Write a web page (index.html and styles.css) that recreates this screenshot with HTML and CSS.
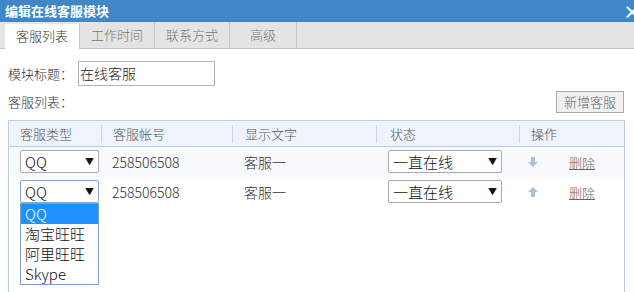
FILE: index.html
```html
<!DOCTYPE html>
<html lang="zh-CN">
<head>
    <meta charset="UTF-8">
    <title>编辑在线客服模块</title>
    <link rel="stylesheet" href="styles.css">
</head>
<body>
    <div class="dialog">
        <div class="dialog-title">
            <span>编辑在线客服模块</span>
            <span class="close">&times;</span>
        </div>
        <ul class="tabs">
            <li class="active">客服列表</li>
            <li>工作时间</li>
            <li>联系方式</li>
            <li class="last">高级</li>
        </ul>
        <div class="panel">
            <div class="field">
                <span class="label">模块标题：</span>
                <div class="text-input">在线客服</div>
            </div>
            <div class="list-head">
                <span class="label">客服列表：</span>
                <button class="btn">新增客服</button>
            </div>
            <div class="grid">
                <div class="row head">
                    <div class="c1">客服类型</div>
                    <div class="c2">客服帐号</div>
                    <div class="c3">显示文字</div>
                    <div class="c4">状态</div>
                    <div class="c5">操作</div>
                </div>
                <div class="row odd">
                    <div class="c1"><div class="select small">QQ<span class="caret">&#9660;</span></div></div>
                    <div class="c2">258506508</div>
                    <div class="c3">客服一</div>
                    <div class="c4"><div class="select wide">一直在线<span class="caret">&#9660;</span></div></div>
                    <div class="c5">
                        <svg class="arrow" width="10" height="10" viewBox="0 0 10 10"><path d="M3 0h4v5h3l-5 5-5-5h3z" fill="#a9c1dc"/></svg>
                        <a href="#" class="del">删除</a>
                    </div>
                </div>
                <div class="row">
                    <div class="c1 drop">
                        <div class="select small focus">QQ<span class="caret">&#9660;</span></div>
                        <ul class="options">
                            <li class="on">QQ</li>
                            <li>淘宝旺旺</li>
                            <li>阿里旺旺</li>
                            <li>Skype</li>
                        </ul>
                    </div>
                    <div class="c2">258506508</div>
                    <div class="c3">客服一</div>
                    <div class="c4"><div class="select wide">一直在线<span class="caret">&#9660;</span></div></div>
                    <div class="c5">
                        <svg class="arrow" width="10" height="10" viewBox="0 0 10 10"><path d="M3 10h4v-5h3l-5-5-5 5h3z" fill="#a9c1dc"/></svg>
                        <a href="#" class="del">删除</a>
                    </div>
                </div>
            </div>
        </div>
    </div>
</body>
</html>
```

FILE: styles.css
```css
body {
    margin: 0;
    font-family: "Noto Sans CJK SC", "Noto Sans", sans-serif;
    font-size: 13px;
    font-weight: 300;
    color: #333;
    background-color: #fff;
    overflow: hidden;
}
.dialog {
    width: 634px;
    height: 292px;
    overflow: hidden;
}
.dialog-title {
    height: 22px;
    line-height: 22px;
    background-color: #3f87c6;
    color: #fff;
    font-weight: bold;
    font-size: 13px;
    padding-left: 5px;
    display: flex;
    justify-content: space-between;
}
.close {
    font-size: 18px;
    margin-right: -7px;
}
.tabs {
    list-style: none;
    margin: 0;
    padding: 0 0 0 5px;
    height: 26px;
    background-color: #e4e4e4;
    border-bottom: 1px solid #c6c6c6;
    display: flex;
}
.tabs li {
    width: 74px;
    border-right: 1px solid #c6c6c6;
    text-align: center;
    line-height: 26px;
    color: #777;
}
.tabs li.last {
    width: 66px;
}
.tabs li.active {
    background-color: #fff;
    color: #333;
    margin-top: 2px;
    height: 25px;
    line-height: 23px;
}
.panel {
    padding: 0 9px 0 8px;
}
.field {
    display: flex;
    align-items: center;
    margin-top: 12px;
}
.label {
    width: 70px;
}
.text-input {
    width: 134px;
    height: 23px;
    line-height: 23px;
    border: 1px solid #b4b4b4;
    font-size: 14px;
    padding-left: 1px;
    color: #222;
}
.list-head {
    display: flex;
    justify-content: space-between;
    align-items: center;
    margin-top: 3px;
    height: 25px;
}
.btn {
    font-family: inherit;
    font-weight: 300;
    font-size: 13px;
    color: #666;
    background-color: #f0f0f0;
    border: 1px solid #aaa;
    height: 22px;
    width: 68px;
    padding: 0;
    margin-right: 1px;
}
.grid {
    margin-top: 6px;
    border: 1px solid #b9cce8;
    height: 200px;
}
.row {
    display: flex;
    height: 30px;
    align-items: center;
    font-size: 14px;
}
.row.odd {
    background-color: #f7f9fd;
}
.row.head {
    height: 25px;
    background-color: #eef3fc;
    border-bottom: 1px solid #b9cce8;
    font-size: 13px;
    color: #555;
}
.row > div {
    box-sizing: border-box;
    padding-left: 11px;
}
.row.head > div {
    border-left: 1px solid #c9d6e8;
    line-height: 18px;
}
.row.head > div.c1 {
    border-left: none;
}
.c1 { width: 92px; }
.c2 { width: 131px; }
.c3 { width: 144px; padding-left: 12px !important; }
.c4 { width: 143px; }
.c5 { width: 105px; display: flex; align-items: center; }
.row.head .c4 { padding-left: 13px; }
.select {
    box-sizing: border-box;
    height: 23px;
    margin-top: -2px;
    border: 1px solid #aaa;
    border-radius: 2px;
    background-color: #fff;
    padding-left: 4px;
    line-height: 21px;
    font-size: 15px;
    color: #111;
    display: flex;
    justify-content: space-between;
}
.select.small { width: 79px; }
.select.wide { width: 114px; margin-left: 1px; }
.select.focus { border-color: #7ea6d8; }
.caret {
    font-size: 9px;
    margin-right: 4px;
    color: #111;
}
.drop {
    position: relative;
}
.options {
    position: absolute;
    top: 21px;
    left: 11px;
    width: 79px;
    box-sizing: border-box;
    list-style: none;
    margin: 0;
    padding: 0;
    border: 1px solid #7f9fd0;
    background-color: #fff;
    font-size: 15px;
    color: #111;
}
.options li {
    height: 20px;
    line-height: 20px;
    padding-left: 4px;
}
.options li.on {
    background-color: #1e90ff;
    color: #fff;
}
.arrow {
    margin-left: -2px;
}
.del {
    margin-left: 31px;
    color: #666;
    font-size: 13px;
}
```
